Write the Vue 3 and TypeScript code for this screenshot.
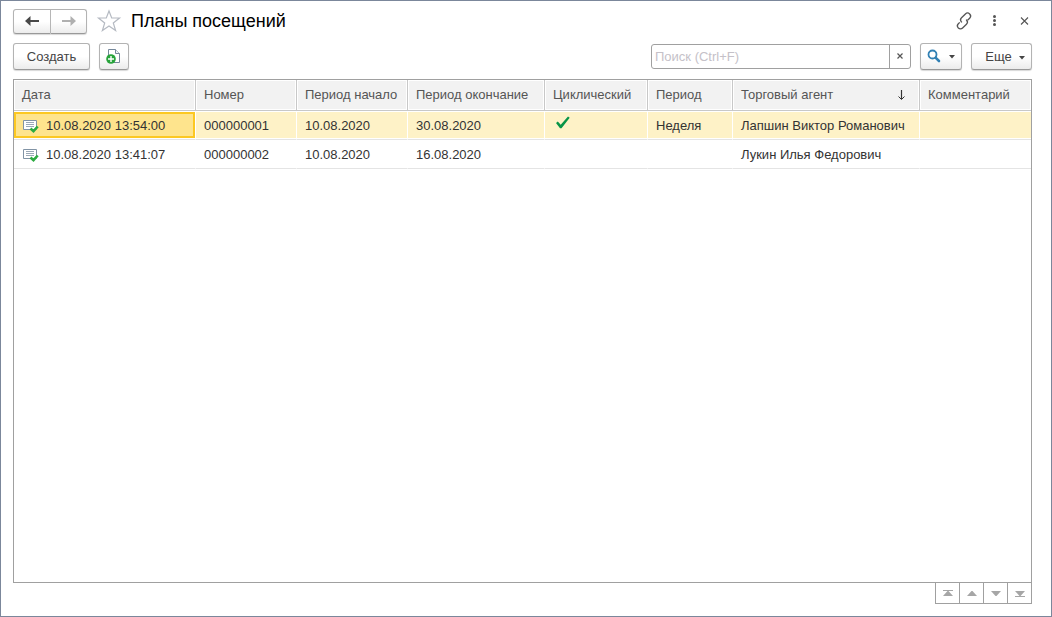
<script setup lang="ts">
import { ref } from 'vue'

interface Plan {
  date: string
  number: string
  start: string
  end: string
  cyclic: boolean
  period: string
  agent: string
  comment: string
}

interface Column {
  key: string
  title: string
  sorted?: boolean
}

const columns: Column[] = [
  { key: 'date', title: 'Дата' },
  { key: 'number', title: 'Номер' },
  { key: 'start', title: 'Период начало' },
  { key: 'end', title: 'Период окончание' },
  { key: 'cyclic', title: 'Циклический' },
  { key: 'period', title: 'Период' },
  { key: 'agent', title: 'Торговый агент', sorted: true },
  { key: 'comment', title: 'Комментарий' },
]

const plans: Plan[] = [
  { date: '10.08.2020 13:54:00', number: '000000001', start: '10.08.2020', end: '30.08.2020', cyclic: true, period: 'Неделя', agent: 'Лапшин Виктор Романович', comment: '' },
  { date: '10.08.2020 13:41:07', number: '000000002', start: '10.08.2020', end: '16.08.2020', cyclic: false, period: '', agent: 'Лукин Илья Федорович', comment: '' },
]

const pager = [
  { label: 'В начало', path: 'M7 7h10v1H7zM11.500 8h1l4.500 5H7z' },
  { label: 'Вверх', path: 'M11.500 8h1l4.500 5H7z' },
  { label: 'Вниз', path: 'M7 8h10l-4.500 5h-1z' },
  { label: 'В конец', path: 'M7 8h10l-4.500 5h-1zM7 13h10v1H7z' },
]

const search = ref('')
const selected = ref(0)
</script>

<template>
  <main class="window">
    <header class="titlebar">
      <div class="history">
        <button type="button" class="btn" aria-label="Назад">
          <svg width="16" height="12" viewBox="0 0 16 12"><path d="M1 6l5.500-5v3.900H15v2.200H6.500V11z" fill="#484848" /></svg>
        </button>
        <button type="button" class="btn" aria-label="Вперед">
          <svg width="16" height="12" viewBox="0 0 16 12"><path d="M15 6L9.500 1v3.900H1v2.200h8.500V11z" fill="#b0b0b0" /></svg>
        </button>
      </div>
      <button type="button" class="plain star" aria-label="Избранное">
        <svg width="24" height="24" viewBox="0 0 24 24"><path d="M12 2l2.700 7h7.800l-6.200 5 2.300 7.500-6.600-4.500-6.600 4.500L7.700 14 1.500 9h7.800z" fill="#fff" stroke="#b5bac2" stroke-width="1.200" /></svg>
      </button>
      <h1>Планы посещений</h1>
      <div class="tools">
        <button type="button" class="plain" aria-label="Получить ссылку">
          <svg width="16" height="18" viewBox="0 0 16 18"><g transform="rotate(-45 8 9)" fill="none" stroke="#555" stroke-width="1.300"><path d="M5.500 8.500V8a3 3 0 0 1 3-3H14a3 3 0 0 1 0 6h-3" /><path d="M10.500 9.500v.500a3 3 0 0 1-3 3H2a3 3 0 0 1 0-6h2" /></g></svg>
        </button>
        <button type="button" class="plain" aria-label="Меню">
          <svg width="16" height="18" viewBox="0 0 16 18"><g fill="#555"><circle cx="8.500" cy="4.500" r="1.500" /><circle cx="8.500" cy="8.500" r="1.500" /><circle cx="8.500" cy="12.500" r="1.500" /></g></svg>
        </button>
        <button type="button" class="plain" aria-label="Закрыть">
          <svg width="16" height="18" viewBox="0 0 16 18"><path d="M5 5.500l7 7m0-7l-7 7" stroke="#555" stroke-width="1.100" /></svg>
        </button>
      </div>
    </header>

    <div class="commands">
      <button type="button" class="btn create">Создать</button>
      <button type="button" class="btn copy" aria-label="Создать копированием">
        <svg width="16" height="18" viewBox="0 0 16 18">
          <path d="M2.500 2.500h7l4 4v9h-11z" fill="#fff" stroke="#75879a" />
          <path d="M9.500 2.500v4h4" fill="#eef1f4" stroke="#75879a" />
          <circle cx="5" cy="12" r="4.800" fill="#27a33b" />
          <path d="M5 9v6m-3-3h6" stroke="#fff" stroke-width="1.400" />
        </svg>
      </button>
      <div class="search">
        <input v-model="search" type="text" aria-label="Поиск" placeholder="Поиск (Ctrl+F)">
        <button type="button" aria-label="Очистить" @click="search = ''">
          <svg width="8" height="8" viewBox="0 0 8 8"><path d="M1.500 1.500l5 5m0-5l-5 5" stroke="#555" stroke-width="1.200" /></svg>
        </button>
      </div>
      <button type="button" class="btn find" aria-label="Найти">
        <svg width="14" height="14" viewBox="0 0 14 14"><circle cx="5.500" cy="5.500" r="4" fill="none" stroke="#3180b4" stroke-width="1.800" /><path d="M8.800 8.800L12 12" stroke="#3180b4" stroke-width="2.600" stroke-linecap="round" /></svg>
        <svg class="caret" width="6" height="4" viewBox="0 0 6 4"><path d="M0 0h6L3 3.500z" fill="#444" /></svg>
      </button>
      <button type="button" class="btn more">
        Еще
        <svg class="caret" width="6" height="4" viewBox="0 0 6 4"><path d="M0 0h6L3 3.500z" fill="#444" /></svg>
      </button>
    </div>

    <section class="list">
      <table>
        <colgroup>
          <col v-for="column in columns" :key="column.key" :class="'col-' + column.key">
        </colgroup>
        <thead>
          <tr>
            <th v-for="column in columns" :key="column.key" scope="col" :aria-sort="column.sorted ? 'ascending' : undefined">
              <div class="heading">
                {{ column.title }}
                <svg v-if="column.sorted" width="7" height="11" viewBox="0 0 7 11"><path d="M3.500 0v9" stroke="#333" stroke-width="1.200" /><path d="M.500 6.500L3.500 9.500l3-3" fill="none" stroke="#333" /></svg>
              </div>
            </th>
          </tr>
        </thead>
        <tbody>
          <tr v-for="(plan, index) in plans" :key="plan.number" :class="{ selected: selected === index }" @click="selected = index">
            <td>
              <div class="document">
                <svg width="16" height="14" viewBox="0 0 16 14">
                  <path d="M.500 1.500h13v9H.500z" fill="#fff" stroke="#8193a5" />
                  <path d="M3 3.500h8M3 5.500h8M3 7.500h8" stroke="#9aa8b6" />
                  <path d="M7.500 9.500l3 2.700 4.200-4.700" fill="none" stroke="#2cab40" stroke-width="2.600" />
                </svg>
                {{ plan.date }}
              </div>
            </td>
            <td>{{ plan.number }}</td>
            <td>{{ plan.start }}</td>
            <td>{{ plan.end }}</td>
            <td>
              <svg v-if="plan.cyclic" class="tick" role="img" aria-label="Да" width="14" height="13" viewBox="0 0 14 13"><path d="M0 7l1.800-1.500L4.700 8.700 12 .500l1.700 1.200L5.500 12.300H4z" fill="#079447" /></svg>
            </td>
            <td>{{ plan.period }}</td>
            <td>{{ plan.agent }}</td>
            <td>{{ plan.comment }}</td>
          </tr>
        </tbody>
      </table>
    </section>

    <nav class="pager" aria-label="Прокрутка списка">
      <button v-for="item in pager" :key="item.label" type="button" :aria-label="item.label">
        <svg width="23" height="20" viewBox="0 0 23 20"><path :d="item.path" fill="#a6a6a6" /></svg>
      </button>
    </nav>
  </main>
</template>

<style>
body {
  margin: 0;
  background: #fff;
}
</style>

<style scoped>
* {
  box-sizing: border-box;
}

.window {
  display: flex;
  flex-direction: column;
  min-height: 100vh;
  padding: 7px 19px 12px 12px;
  border: 1px solid #7b879b;
  background: #fff;
  color: #333;
  font: 13px/16px "Liberation Sans", Arial, sans-serif;
}

button,
input {
  margin: 0;
  padding: 0;
  border: 0;
  background: none;
  color: #444;
  font: inherit;
}

svg {
  display: block;
  flex: none;
  overflow: visible;
}

.titlebar {
  display: flex;
  align-items: center;
  height: 26px;
}

.btn {
  display: flex;
  align-items: center;
  justify-content: center;
  height: 27px;
  border: 1px solid #b3b3b3;
  border-bottom-color: #999;
  border-radius: 3px;
  background: linear-gradient(#fff 50%, #ececec);
  box-shadow: 0 1px 1px #d8d8d8;
}

.history {
  display: flex;
}

.history .btn {
  width: 38px;
  height: 25px;
}

.history .btn:first-child {
  border-radius: 3px 0 0 3px;
}

.history .btn:last-child {
  width: 36px;
  border-left: 0;
  border-radius: 0 3px 3px 0;
}

.star {
  margin-left: 10px;
}

h1 {
  margin: 0 0 0 10px;
  color: #000;
  font-size: 18px;
  font-weight: 400;
  line-height: 24px;
}

.tools {
  display: flex;
  gap: 14px;
  margin-left: auto;
}

.commands {
  display: flex;
  align-items: center;
  height: 28px;
  margin-top: 8px;
}

.create {
  width: 77px;
  padding-top: 2px;
}

.copy {
  width: 30px;
  margin-left: 9px;
}

.search {
  display: flex;
  width: 260px;
  height: 25px;
  margin-left: auto;
  border: 1px solid #a0a0a0;
  border-radius: 3px;
}

.search input {
  flex: 1;
  min-width: 0;
  padding: 2px 3px 0;
}

.search input::placeholder {
  color: #c5c1c8;
  opacity: 1;
}

.search button {
  display: flex;
  align-items: center;
  justify-content: center;
  width: 21px;
  border-left: 1px solid #a0a0a0;
}

.find {
  gap: 8px;
  width: 42px;
  margin-left: 9px;
}

.more {
  gap: 7px;
  width: 61px;
  margin-left: 9px;
  padding: 2px 0 0 7px;
}

.caret {
  margin-top: 2px;
}

.list {
  flex: 1;
  margin-top: 9px;
  border: 1px solid #a0a0a0;
}

table {
  width: 100%;
  border-collapse: separate;
  border-spacing: 0;
  table-layout: fixed;
}

.col-date {
  width: 182px;
}

.col-number {
  width: 101px;
}

.col-start {
  width: 111px;
}

.col-end {
  width: 137px;
}

.col-cyclic {
  width: 103px;
}

.col-period {
  width: 85px;
}

.col-agent {
  width: 187px;
}

th,
td {
  overflow: hidden;
  padding: 0 8px;
  text-align: left;
  white-space: nowrap;
}

th {
  height: 31px;
  border-right: 1px solid #c8c8c8;
  border-bottom: 1px solid #c8c8c8;
  background: #f2f2f2;
  box-shadow: inset 0 0 0 1px #fff;
  color: #555;
  font-weight: 400;
}

th:last-child {
  border-right: 0;
}

.heading {
  display: flex;
  align-items: center;
  justify-content: space-between;
  padding-right: 6px;
}

td {
  height: 29px;
  padding-top: 2px;
  border-right: 1px solid transparent;
  border-bottom: 1px solid #e4e4e4;
}

.selected td {
  border-right-color: #fff;
  background: #fef2c7;
  box-shadow: inset 0 1px #fff, inset 0 -1px #fff;
}

td:last-child,
.selected td:last-child {
  border-right: 0;
}

td:first-child {
  padding: 3px 2px;
}

.selected td:first-child {
  background: linear-gradient(#fee48d, #fee48d) content-box, #fcc822;
}

.document {
  display: flex;
  align-items: center;
  gap: 7px;
  height: 22px;
  padding: 2px 0 0 7px;
}

.tick {
  margin: 0 0 8px 3px;
}

.pager {
  display: flex;
  align-self: flex-end;
  border: 1px solid #a0a0a0;
  border-top: 0;
}

.pager button {
  height: 20px;
}

.pager button + button {
  border-left: 1px solid #a0a0a0;
}
</style>
